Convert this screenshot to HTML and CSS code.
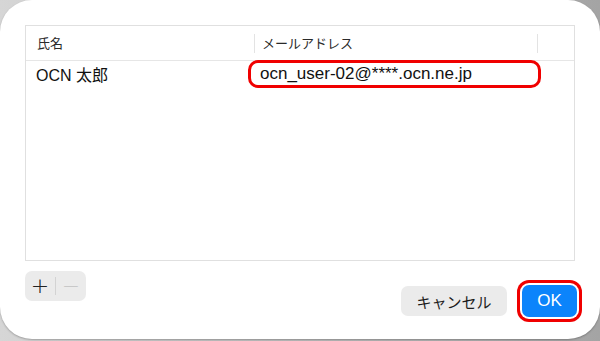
FILE: index.html
```html
<!DOCTYPE html>
<html>
<head>
    <title>連絡先</title>
    <link rel="stylesheet" href="styles.css">
</head>
<body>
    <div class="dialog">
        <div class="table-box">
            <div class="table-head">
                <div class="th th-name">氏名</div>
                <div class="th th-mail">メールアドレス</div>
                <div class="th th-rest"></div>
            </div>
            <div class="table-row">
                <div class="td td-name">OCN 太郎</div>
                <div class="td td-mail">
                    ocn_user-02@****.ocn.ne.jp
                    <span class="mark"></span>
                </div>
            </div>
        </div>

        <div class="footer">
            <div class="seg">
                <span class="seg-btn plus">+</span>
                <span class="seg-sep"></span>
                <span class="seg-btn minus">−</span>
            </div>
            <div class="actions">
                <button class="btn btn-cancel">キャンセル</button>
                <button class="btn btn-ok">OK</button>
            </div>
        </div>
    </div>
</body>
</html>
```

FILE: styles.css
```css
html, body {
    margin: 0;
    padding: 0;
}
body {
    width: 600px;
    height: 341px;
    overflow: hidden;
    background: linear-gradient(90deg, #d6d6d6 0%, #b8b8b8 60%, #a4a4a4 100%);
    font-family: "Liberation Sans", "Noto Sans CJK JP", sans-serif;
    color: #1d1d1d;
}
.dialog {
    width: 600px;
    height: 339px;
    box-sizing: border-box;
    background: #fff;
    border-radius: 32px;
    padding: 25px 26px 0 25px;
    box-shadow: 0 1px 2px rgba(0,0,0,0.25);
}
.table-box {
    width: 550px;
    height: 236px;
    box-sizing: border-box;
    border: 1px solid #e0e0e0;
}
.table-head {
    display: flex;
    height: 34px;
    border-bottom: 1px solid #e6e6e6;
    align-items: center;
}
.th {
    font-size: 13px;
    color: #2a2a2a;
    height: 19px;
    line-height: 19px;
}
.th-name {
    width: 229px;
    padding-left: 11px;
    box-sizing: border-box;
    border-right: 1px solid #e3e3e3;
}
.th-mail {
    width: 283px;
    padding-left: 7px;
    box-sizing: border-box;
    border-right: 1px solid #e3e3e3;
}
.table-row {
    display: flex;
    height: 26px;
}
.td {
    display: flex;
    align-items: center;
    color: #111;
    white-space: nowrap;
}
.td-name {
    width: 229px;
    padding-left: 10px;
    box-sizing: border-box;
    font-size: 16px;
}
.td-mail {
    position: relative;
    padding-left: 5px;
    font-size: 17px;
}
.mark {
    position: absolute;
    left: -7px;
    top: -1px;
    width: 293px;
    height: 28px;
    box-sizing: border-box;
    border: 3px solid #f00000;
    border-radius: 10px;
}
.footer {
    display: flex;
    justify-content: space-between;
    align-items: flex-start;
    margin-top: 10px;
}
.seg {
    display: flex;
    align-items: center;
    width: 61px;
    height: 30px;
    background: #ebebeb;
    border-radius: 7px;
}
.seg-btn {
    width: 30px;
    text-align: center;
    font-size: 22px;
    line-height: 30px;
    font-family: "DejaVu Sans", sans-serif;
    font-weight: 300;
}
.plus {
    color: #222;
}
.minus {
    color: #c2c2c2;
}
.seg-sep {
    width: 1px;
    height: 18px;
    background: #d3d3d3;
}
.actions {
    display: flex;
    align-items: center;
    gap: 15px;
    margin-top: 14px;
    margin-right: -3px;
}
.btn {
    border: none;
    margin: 0;
    padding: 0;
    cursor: pointer;
    font-family: "Liberation Sans", "Noto Sans CJK JP", sans-serif;
}
.btn-cancel {
    width: 106px;
    height: 30px;
    border-radius: 7px;
    background: #ebebeb;
    color: #1d1d1d;
    font-size: 15px;
}
.btn-ok {
    width: 55px;
    height: 32px;
    border-radius: 7px;
    background: #0b84fb;
    color: #fff;
    font-size: 17px;
    box-shadow: 0 0 0 2px #fff, 0 0 0 5px #f00000;
}
```
